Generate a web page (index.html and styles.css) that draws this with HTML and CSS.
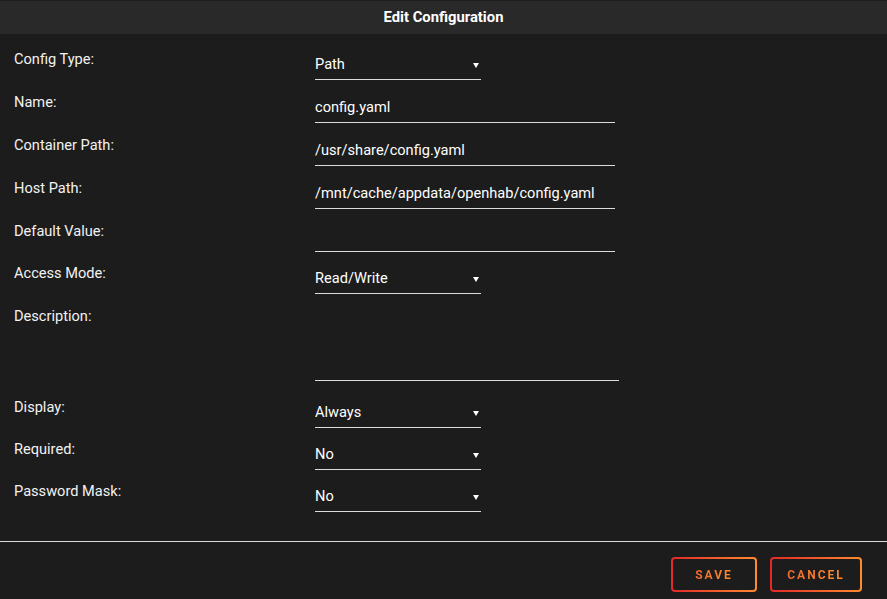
FILE: index.html
```html
<!DOCTYPE html>
<html>
<head>
    <title>Edit Configuration</title>
    <link rel="stylesheet" href="styles.css">
</head>
<body>
    <div class="dialog">
        <div class="title">Edit Configuration</div>

        <!-- Config fields -->
        <div class="form">
            <div class="row">
                <label>Config Type:</label>
                <div class="select-wrap"><select><option>Path</option><option>Port</option><option>Variable</option><option>Label</option><option>Device</option></select></div>
            </div>
            <div class="row">
                <label>Name:</label>
                <input type="text" value="config.yaml">
            </div>
            <div class="row">
                <label>Container Path:</label>
                <input type="text" value="/usr/share/config.yaml">
            </div>
            <div class="row">
                <label>Host Path:</label>
                <input type="text" value="/mnt/cache/appdata/openhab/config.yaml">
            </div>
            <div class="row">
                <label>Default Value:</label>
                <input type="text" value="">
            </div>
            <div class="row row-tight">
                <label>Access Mode:</label>
                <div class="select-wrap"><select><option>Read/Write</option><option>Read Only</option></select></div>
            </div>
            <div class="row row-tall">
                <label>Description:</label>
                <textarea></textarea>
            </div>
            <div class="row row-after-tall">
                <label>Display:</label>
                <div class="select-wrap"><select><option>Always</option><option>Advanced</option></select></div>
            </div>
            <div class="row row-tight">
                <label>Required:</label>
                <div class="select-wrap"><select><option>No</option><option>Yes</option></select></div>
            </div>
            <div class="row row-tight">
                <label>Password Mask:</label>
                <div class="select-wrap"><select><option>No</option><option>Yes</option></select></div>
            </div>
        </div>

        <div class="buttons">
            <button><span>Save</span></button>
            <button class="wide"><span>Cancel</span></button>
        </div>
    </div>
</body>
</html>
```

FILE: styles.css
```css
body {
    font-family: Roboto, "Noto Sans", sans-serif;
    background-color: #1c1c1c;
    color: #f2f2f2;
    margin: 0;
    font-size: 14.6px;
}
.dialog {
    width: 887px;
    height: 599px;
    overflow: hidden;
}
.title {
    background: #292929;
    border-top: 1px solid #1e1e1e;
    height: 33px;
    line-height: 33px;
    text-align: center;
    font-weight: bold;
    font-size: 14.8px;
    color: #ffffff;
}
.form {
    display: flex;
    flex-direction: column;
    gap: 13px;
    padding: 16px 0 0 14px;
    border-bottom: 1px solid #dcdcdc;
    box-sizing: border-box;
    height: 508px;
}
.row {
    display: flex;
    align-items: flex-start;
}
.row-after-tall {
    margin-top: 4px;
}
.row-tight {
    margin-top: -1px;
}
label {
    width: 301px;
    line-height: 20px;
    margin-top: -1px;
    flex: none;
}
input, select, textarea {
    font-family: inherit;
    font-size: 14.6px;
    color: #ffffff;
    background: transparent;
    border: none;
    border-bottom: 1px solid #dcdcdc;
    outline: none;
    margin: 0;
    padding: 0;
    box-sizing: border-box;
}
input {
    width: 300px;
    height: 30px;
    padding-bottom: 2px;
}
textarea {
    width: 304px;
    height: 74px;
    resize: none;
}
.select-wrap {
    position: relative;
    width: 166px;
}
.select-wrap::after {
    content: "";
    position: absolute;
    right: 2px;
    top: 13px;
    border-left: 3px solid transparent;
    border-right: 3px solid transparent;
    border-top: 5px solid #ffffff;
    pointer-events: none;
}
select {
    -webkit-appearance: none;
    appearance: none;
    width: 100%;
    height: 30px;
    padding-bottom: 1px;
}
select option {
    background: #1c1c1c;
}
.buttons {
    display: flex;
    justify-content: flex-end;
    gap: 13px;
    padding: 15px 25px 0 0;
}
button {
    width: 86px;
    height: 35px;
    border: 2px solid transparent;
    border-radius: 4px;
    background: linear-gradient(#1c1c1c, #1c1c1c) padding-box,
                linear-gradient(90deg, #e22828, #ff8c2f) border-box;
    font-family: inherit;
    font-size: 12px;
    font-weight: bold;
    letter-spacing: 2px;
    text-transform: uppercase;
    cursor: pointer;
}
button.wide {
    width: 92px;
}
button span {
    background: linear-gradient(90deg, #ee6a2c, #ff8c2f);
    -webkit-background-clip: text;
    background-clip: text;
    color: transparent;
}
```
